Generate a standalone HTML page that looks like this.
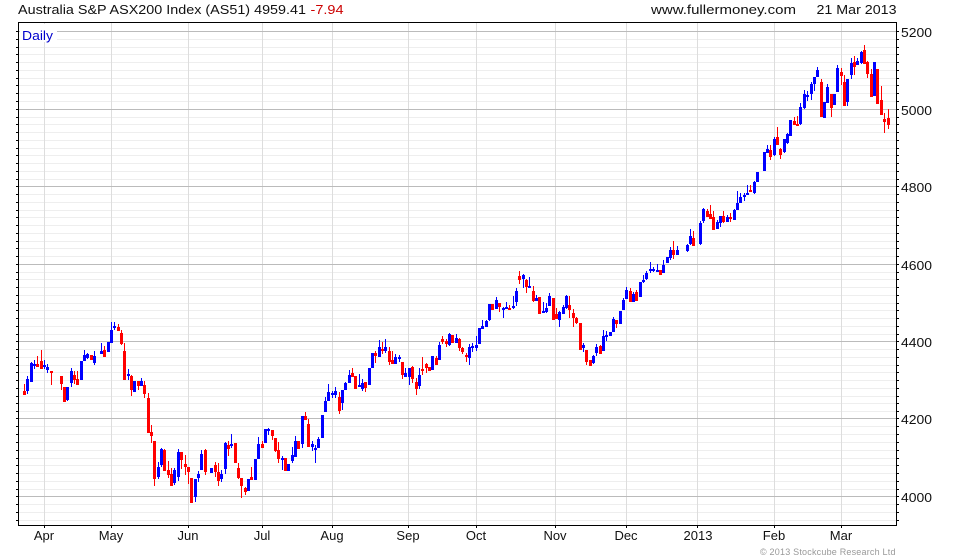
<!DOCTYPE html>
<html>
<head>
<meta charset="utf-8">
<style>
html,body{margin:0;padding:0;background:#fff;width:980px;height:560px;overflow:hidden}
svg{display:block}
text{font-family:"Liberation Sans",Arial,sans-serif;font-size:13px;fill:#111}
</style>
</head>
<body>
<svg width="980" height="560" viewBox="0 0 980 560" xmlns="http://www.w3.org/2000/svg">
<g shape-rendering="crispEdges" fill="none">
<path stroke="#eee" d="M19 39.5H896M19 47.5H896M19 54.5H896M19 62.5H896M19 70.5H896M19 78.5H896M19 85.5H896M19 93.5H896M19 101.5H896M19 117.5H896M19 124.5H896M19 132.5H896M19 140.5H896M19 148.5H896M19 155.5H896M19 163.5H896M19 171.5H896M19 179.5H896M19 194.5H896M19 202.5H896M19 210.5H896M19 217.5H896M19 225.5H896M19 233.5H896M19 241.5H896M19 248.5H896M19 256.5H896M19 272.5H896M19 279.5H896M19 287.5H896M19 295.5H896M19 303.5H896M19 310.5H896M19 318.5H896M19 326.5H896M19 334.5H896M19 349.5H896M19 357.5H896M19 365.5H896M19 372.5H896M19 380.5H896M19 388.5H896M19 396.5H896M19 403.5H896M19 411.5H896M19 426.5H896M19 434.5H896M19 442.5H896M19 450.5H896M19 458.5H896M19 465.5H896M19 473.5H896M19 481.5H896M19 489.5H896M19 504.5H896M19 512.5H896M19 520.5H896"/>
<path stroke="#ddd" d="M44.5 23V525M111.5 23V525M188.5 23V525M262.5 23V525M332.5 23V525M408.5 23V525M476.5 23V525M555.5 23V525M626.5 23V525M697.5 23V525M774.5 23V525M841.5 23V525"/>
<path stroke="#bbb" d="M19 31.5H896M19 109.5H896M19 186.5H896M19 264.5H896M19 341.5H896M19 418.5H896M19 496.5H896"/>
<rect x="20" y="24" width="37" height="18" fill="#fff"/>

<!-- wicks blue -->
<path stroke="#00f" d="M27.5 376V394M31.5 362V382M34.5 360V369M44.5 360V369M47.5 364V373M67.5 387V401M71.5 368V387M84.5 350V361M87.5 353V359M94.5 351V365M101.5 343V354M111.5 322V343M114.5 322V330M128.5 369V380M141.5 378V386M158.5 462V479M161.5 448V467M174.5 468V485M178.5 449V481M195.5 479V502M198.5 471V482M201.5 450V470M221.5 470V482M225.5 442V474M231.5 434V448M258.5 437V459M268.5 428V435M282.5 456V470M292.5 447V463M295.5 436V457M302.5 416V448M312.5 441V451M315.5 445V463M318.5 437V448M325.5 397V412M328.5 384V401M332.5 391V398M335.5 387V398M342.5 390V410M345.5 382V390M349.5 370V383M359.5 374V387M362.5 379V391M379.5 340V357M385.5 339V353M395.5 354V364M399.5 355V362M405.5 368V377M409.5 368V385M419.5 368V389M439.5 342V360M449.5 333V346M456.5 334V343M469.5 344V365M472.5 343V352M476.5 336V351M482.5 320V329M486.5 320V327M489.5 304V321M496.5 297V309M503.5 307V318M506.5 302V309M513.5 296V309M516.5 288V306M523.5 274V288M529.5 277V288M536.5 295V301M543.5 302V313M546.5 303V313M549.5 293V306M559.5 311V327M563.5 305V314M566.5 295V309M583.5 343V352M593.5 355V364M596.5 344V356M603.5 330V351M606.5 331V341M613.5 317V332M623.5 298V310M626.5 287V299M633.5 292V302M643.5 275V283M646.5 271V280M650.5 262V273M653.5 267V272M657.5 264V272M663.5 260V273M670.5 247V260M677.5 246V255M687.5 244V252M690.5 229V245M700.5 221V245M703.5 208V223M717.5 220V229M720.5 216V227M727.5 215V222M734.5 209V220M737.5 191V210M740.5 193V203M744.5 193V201M747.5 185V195M754.5 181V194M767.5 145V153M774.5 137V156M784.5 139V153M787.5 133V144M800.5 103V125M804.5 90V109M807.5 91V101M811.5 82V100M814.5 77V91M817.5 67V77M827.5 84V103M837.5 65V92M847.5 79V106M851.5 58V79M857.5 58V65M861.5 51V64"/>
<!-- wicks red -->
<path stroke="#f00" d="M24.5 384V395M37.5 356V367M41.5 350V369M51.5 371V385M61.5 376V390M74.5 371V384M77.5 371V385M104.5 346V357M118.5 324V331M121.5 330V345M124.5 343V380M131.5 375V396M138.5 381V390M144.5 381V398M148.5 393V433M151.5 425V443M154.5 441V486M164.5 449V471M168.5 461V478M171.5 468V486M181.5 452V469M185.5 455V475M188.5 467V484M205.5 449V475M215.5 462V477M218.5 463V486M228.5 441V456M238.5 463V479M241.5 478V498M245.5 487V495M251.5 467V480M262.5 441V448M272.5 430V440M275.5 438V452M278.5 442V463M305.5 412V420M308.5 419V447M339.5 392V414M352.5 368V377M365.5 382V392M375.5 351V363M382.5 342V354M389.5 347V365M392.5 351V364M402.5 362V379M412.5 366V383M416.5 378V395M422.5 357V375M426.5 363V373M436.5 356V365M442.5 336V344M446.5 339V347M459.5 338V351M462.5 347V354M466.5 353V362M499.5 303V312M509.5 305V310M519.5 271V284M526.5 279V293M533.5 286V302M556.5 308V319M569.5 296V318M573.5 309V327M576.5 317V324M586.5 350V365M600.5 345V354M616.5 320V328M630.5 288V302M636.5 290V301M673.5 241V259M693.5 231V246M707.5 209V217M710.5 205V219M713.5 211V230M723.5 211V223M730.5 213V222M750.5 185V192M770.5 145V160M777.5 127V145M780.5 148V159M794.5 117V125M797.5 116V126M821.5 79V117M831.5 94V117M841.5 68V85M844.5 75V106M854.5 56V75M864.5 45V64M867.5 61V78M871.5 69V97M881.5 86V115M884.5 113V133M888.5 109V129"/>
<!-- bodies blue -->
<path stroke="#00f" stroke-width="3" d="M27.5 379V391M31.5 363V382M34.5 364V366M44.5 365V367M47.5 367V370M67.5 387V400M71.5 371V383M81.5 361V380M84.5 355V361M87.5 354V358M94.5 356V363M101.5 351V354M108.5 342V352M111.5 330V343M114.5 326V328M128.5 374V376M134.5 381V392M141.5 381V386M158.5 467V477M161.5 449V465M174.5 470V483M178.5 452V477M195.5 479V497M198.5 474V478M201.5 454V470M211.5 468V473M221.5 474V479M225.5 443V469M231.5 444V446M248.5 479V491M255.5 459V480M258.5 444V459M265.5 429V443M268.5 429V431M282.5 458V460M288.5 464V471M292.5 455V461M295.5 441V457M302.5 416V444M312.5 444V447M315.5 448V450M318.5 439V448M322.5 415V438M325.5 401V412M328.5 392V401M332.5 393V395M335.5 391V395M342.5 390V403M345.5 383V390M349.5 375V383M359.5 385V387M362.5 383V389M369.5 368V385M372.5 353V368M379.5 347V357M385.5 347V351M395.5 357V364M399.5 357V359M405.5 373V377M409.5 368V377M419.5 375V386M432.5 356V370M439.5 345V360M449.5 334V345M456.5 338V343M469.5 347V358M472.5 346V348M476.5 345V348M479.5 328V344M482.5 326V329M486.5 321V327M489.5 304V320M496.5 300V309M503.5 308V310M506.5 307V309M513.5 306V308M516.5 291V302M523.5 275V279M529.5 286V288M536.5 298V301M543.5 311V313M546.5 308V312M549.5 296V306M559.5 312V320M563.5 307V314M566.5 296V308M583.5 345V348M593.5 356V363M596.5 347V353M603.5 336V351M606.5 335V337M610.5 332V336M613.5 319V332M620.5 311V324M623.5 300V310M626.5 290V299M633.5 294V302M640.5 282V297M643.5 280V282M646.5 273V279M650.5 269V271M653.5 269V271M657.5 270V272M663.5 265V273M667.5 257V263M670.5 250V258M677.5 250V255M687.5 245V251M690.5 236V244M700.5 223V244M703.5 209V221M717.5 222V229M720.5 216V223M727.5 217V222M734.5 210V220M737.5 203V210M740.5 197V203M744.5 195V197M747.5 193V195M754.5 182V193M757.5 172V182M764.5 152V171M767.5 149V153M774.5 139V155M784.5 139V152M787.5 134V143M790.5 120V136M800.5 107V124M804.5 94V108M807.5 95V97M811.5 84V94M814.5 77V84M817.5 70V77M824.5 102V118M827.5 87V103M834.5 94V105M837.5 68V92M847.5 79V102M851.5 63V75M857.5 61V65M861.5 52V63M874.5 62V96"/>
<!-- bodies red -->
<path stroke="#f00" stroke-width="3" d="M24.5 391V395M37.5 364V367M41.5 361V369M51.5 371V373M61.5 376V384M64.5 387V402M74.5 375V380M77.5 379V385M91.5 355V360M104.5 350V357M118.5 327V331M121.5 333V344M124.5 351V380M131.5 376V390M138.5 381V386M144.5 385V394M148.5 398V433M151.5 432V436M154.5 441V479M164.5 450V471M168.5 470V475M171.5 474V486M181.5 452V460M185.5 464V467M188.5 467V472M191.5 478V503M205.5 450V472M215.5 465V472M218.5 472V481M228.5 445V449M235.5 443V463M238.5 468V478M241.5 478V486M245.5 488V492M251.5 477V480M262.5 444V448M272.5 430V436M275.5 438V451M278.5 450V459M285.5 458V471M298.5 441V449M305.5 416V420M308.5 424V447M339.5 397V411M352.5 373V377M355.5 376V389M365.5 382V388M375.5 353V356M382.5 349V351M389.5 351V362M392.5 360V364M402.5 362V375M412.5 367V379M416.5 382V389M422.5 369V371M426.5 364V368M429.5 367V371M436.5 358V365M442.5 339V342M446.5 341V344M452.5 335V343M459.5 339V348M462.5 348V352M466.5 355V357M492.5 304V310M499.5 303V307M509.5 308V310M519.5 276V280M526.5 280V287M533.5 291V301M539.5 297V314M553.5 298V320M556.5 314V319M569.5 305V310M573.5 313V318M576.5 318V323M580.5 323V350M586.5 350V362M590.5 360V366M600.5 346V354M616.5 320V324M630.5 291V302M636.5 292V301M660.5 270V275M673.5 250V255M693.5 238V246M707.5 211V217M710.5 214V219M713.5 217V230M723.5 216V222M730.5 217V219M750.5 190V192M770.5 150V157M777.5 137V145M780.5 149V155M794.5 121V125M797.5 124V126M821.5 82V117M831.5 94V108M841.5 72V76M844.5 82V106M854.5 62V67M864.5 50V64M867.5 62V74M871.5 74V97M877.5 69V104M881.5 100V115M884.5 119V122M888.5 118V125"/>

<path stroke="#000" d="M16 31.5H18M16 39.5H18M16 47.5H18M16 54.5H18M16 62.5H18M16 70.5H18M16 78.5H18M16 85.5H18M16 93.5H18M16 101.5H18M16 109.5H18M16 117.5H18M16 124.5H18M16 132.5H18M16 140.5H18M16 148.5H18M16 155.5H18M16 163.5H18M16 171.5H18M16 179.5H18M16 186.5H18M16 194.5H18M16 202.5H18M16 210.5H18M16 217.5H18M16 225.5H18M16 233.5H18M16 241.5H18M16 248.5H18M16 256.5H18M16 264.5H18M16 272.5H18M16 279.5H18M16 287.5H18M16 295.5H18M16 303.5H18M16 310.5H18M16 318.5H18M16 326.5H18M16 334.5H18M16 341.5H18M16 349.5H18M16 357.5H18M16 365.5H18M16 372.5H18M16 380.5H18M16 388.5H18M16 396.5H18M16 403.5H18M16 411.5H18M16 418.5H18M16 426.5H18M16 434.5H18M16 442.5H18M16 450.5H18M16 458.5H18M16 465.5H18M16 473.5H18M16 481.5H18M16 489.5H18M16 496.5H18M16 504.5H18M16 512.5H18M16 520.5H18"/>
<path stroke="#000" d="M897 31.5H899M897 39.5H899M897 47.5H899M897 54.5H899M897 62.5H899M897 70.5H899M897 78.5H899M897 85.5H899M897 93.5H899M897 101.5H899M897 109.5H899M897 117.5H899M897 124.5H899M897 132.5H899M897 140.5H899M897 148.5H899M897 155.5H899M897 163.5H899M897 171.5H899M897 179.5H899M897 186.5H899M897 194.5H899M897 202.5H899M897 210.5H899M897 217.5H899M897 225.5H899M897 233.5H899M897 241.5H899M897 248.5H899M897 256.5H899M897 264.5H899M897 272.5H899M897 279.5H899M897 287.5H899M897 295.5H899M897 303.5H899M897 310.5H899M897 318.5H899M897 326.5H899M897 334.5H899M897 341.5H899M897 349.5H899M897 357.5H899M897 365.5H899M897 372.5H899M897 380.5H899M897 388.5H899M897 396.5H899M897 403.5H899M897 411.5H899M897 418.5H899M897 426.5H899M897 434.5H899M897 442.5H899M897 450.5H899M897 458.5H899M897 465.5H899M897 473.5H899M897 481.5H899M897 489.5H899M897 496.5H899M897 504.5H899M897 512.5H899M897 520.5H899"/>
<path stroke="#000" d="M44.5 525V528M111.5 525V528M188.5 525V528M262.5 525V528M332.5 525V528M408.5 525V528M476.5 525V528M555.5 525V528M626.5 525V528M697.5 525V528M774.5 525V528M841.5 525V528"/>
<rect x="18.5" y="22.5" width="878" height="503" stroke="#000"/>
</g>

<text x="18" y="14" textLength="288" lengthAdjust="spacingAndGlyphs">Australia S&amp;P ASX200 Index (AS51) 4959.41</text>
<text x="310.500" y="14" textLength="33" lengthAdjust="spacingAndGlyphs" style="fill:#c00">-7.94</text>
<text x="651" y="14" textLength="145" lengthAdjust="spacingAndGlyphs">www.fullermoney.com</text>
<text x="816.500" y="14" textLength="80" lengthAdjust="spacingAndGlyphs">21 Mar 2013</text>
<text x="22" y="40" textLength="31" lengthAdjust="spacingAndGlyphs" style="fill:#00c">Daily</text>

<text x="901" y="37" textLength="31" lengthAdjust="spacingAndGlyphs">5200</text>
<text x="901" y="115" textLength="31" lengthAdjust="spacingAndGlyphs">5000</text>
<text x="901" y="192" textLength="31" lengthAdjust="spacingAndGlyphs">4800</text>
<text x="901" y="270" textLength="31" lengthAdjust="spacingAndGlyphs">4600</text>
<text x="901" y="347" textLength="31" lengthAdjust="spacingAndGlyphs">4400</text>
<text x="901" y="424" textLength="31" lengthAdjust="spacingAndGlyphs">4200</text>
<text x="901" y="502" textLength="31" lengthAdjust="spacingAndGlyphs">4000</text>

<g text-anchor="middle">
<text x="44" y="540">Apr</text>
<text x="111" y="540">May</text>
<text x="188" y="540">Jun</text>
<text x="262" y="540">Jul</text>
<text x="332" y="540">Aug</text>
<text x="408" y="540">Sep</text>
<text x="476" y="540">Oct</text>
<text x="555" y="540">Nov</text>
<text x="626" y="540">Dec</text>
<text x="698" y="540">2013</text>
<text x="774" y="540">Feb</text>
<text x="841" y="540">Mar</text>
</g>
<text x="760" y="555" textLength="135.500" lengthAdjust="spacing" style="font-size:9px;fill:#999">© 2013 Stockcube Research Ltd</text>
</svg>
</body>
</html>
